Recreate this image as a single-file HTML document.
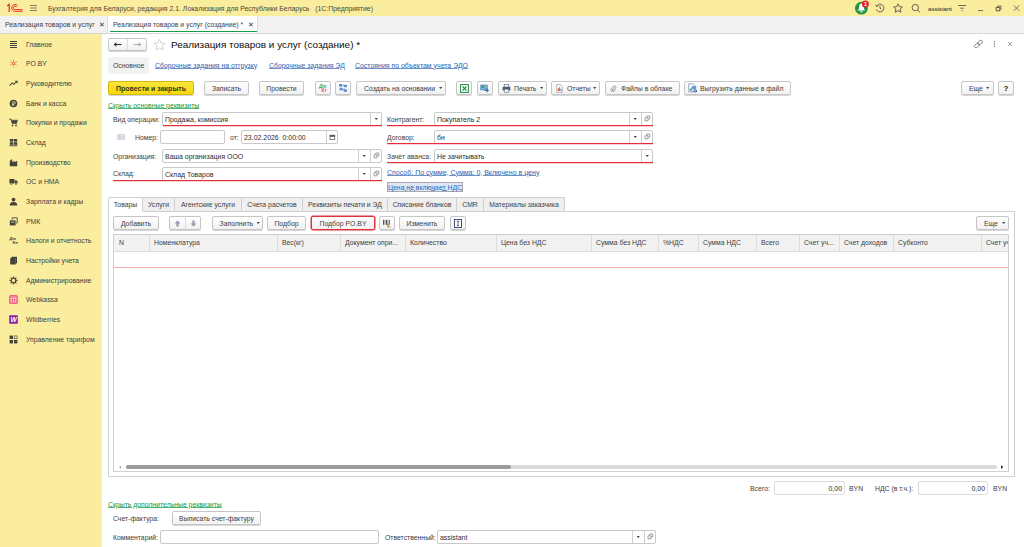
<!DOCTYPE html>
<html lang="ru"><head><meta charset="utf-8"><title>Реализация товаров и услуг (создание)</title>
<style>
*{box-sizing:border-box;margin:0;padding:0}
html,body{width:1024px;height:547px;overflow:hidden;background:#fff}
body{font-family:"Liberation Sans",sans-serif;font-size:6.85px;color:#404040;position:relative;line-height:9px}
.a{position:absolute;white-space:nowrap}
.t{position:absolute;white-space:nowrap;height:9px;line-height:9px}
#titlebar{left:0;top:0;width:1024px;height:16px;background:#fbed9e}
#tabbar{left:0;top:16px;width:1024px;height:18px;background:#f2f2f2;border-bottom:1px solid #d6d6d6}
#side{left:0;top:34px;width:101px;height:513px;background:#fbed9e}
.btn{position:absolute;height:14px;border:1px solid #c6c6c6;border-radius:2px;background:linear-gradient(#fff,#f1f1f1);text-align:center;line-height:14px;white-space:nowrap;box-shadow:0 1px 0.5px rgba(0,0,0,.16)}
.inp{font-size:6.95px;color:#2c2c2c;position:absolute;height:14px;border:1px solid #c9c9c9;border-radius:2px;background:#fff;line-height:13px;padding-left:2px;white-space:nowrap;overflow:hidden}
.ib{position:absolute;top:0;bottom:0;width:11px;border-left:1px solid #d0d0d0}
.red{position:absolute;height:1px;background:#e52d3c;box-shadow:0 0.5px 0.5px rgba(229,45,60,.45)}
.lnk{color:#2f63b3;text-decoration:underline;text-decoration-thickness:0.6px;text-underline-offset:0.3px;text-decoration-color:rgba(47,99,179,.7)}
.g{color:#0e9a47;text-decoration:underline;text-decoration-thickness:0.6px;text-underline-offset:0.3px;text-decoration-color:rgba(14,154,71,.75)}
.tab{position:absolute;top:197px;height:15px;border:1px solid #cfcfcf;border-left:none;background:#efefef;line-height:13px;text-align:center}
.th{position:absolute;top:0;height:16px;line-height:16px;border-right:1px solid #dedede;padding-left:4px;overflow:hidden}
.arr{position:absolute;width:3.4px;height:2px;background:#454545;clip-path:polygon(0 0,100% 0,50% 100%)}
</style></head><body>

<div class="a" id="titlebar">
 <svg class="a" style="left:6px;top:3px" width="18" height="10" viewBox="0 0 18 10"><g fill="none" stroke="#e0242c"><path d="M1.2 3 L3.2 1.3 V9" stroke-width="1.2"/><path d="M11.6 2.6 A3.4 3.4 0 1 0 9.2 8.3 H16.6" stroke-width="0.95"/><path d="M10.6 4 A1.7 1.7 0 1 0 9.2 6.6 H16.6" stroke-width="0.95"/></g></svg>
 <svg class="a" style="left:30px;top:4px" width="8" height="8" viewBox="0 0 8 8"><path d="M0 1.5H7M0 4H7M0 6.5H7" stroke="#6b6650" stroke-width="0.8"/></svg>
 <span class="t" style="left:48px;top:4px;color:#4a4738;font-size:6.9px">Бухгалтерия для Беларуси, редакция 2.1. Локализация для Республики Беларусь &nbsp;&nbsp;(1С:Предприятие)</span>
 <svg class="a" style="left:854px;top:0" width="18" height="16" viewBox="0 0 18 16"><circle cx="7.4" cy="8.2" r="6.4" fill="#1f9647"/><path d="M7.4 3.6 C5.6 3.6 5.2 5.4 5.1 7.2 C5 8.8 4.4 9.8 3.5 10.6 H11.3 C10.4 9.8 9.8 8.8 9.7 7.2 C9.6 5.4 9.2 3.6 7.4 3.6Z" fill="#fff"/><path d="M6.2 11.2 A1.2 1.2 0 0 0 8.6 11.2Z" fill="#fff"/><circle cx="11.4" cy="3.9" r="3.5" fill="#e3242e"/><text x="11.4" y="5.8" font-size="5.4" font-weight="bold" fill="#fff" text-anchor="middle" font-family="Liberation Sans, sans-serif">1</text></svg>
 <svg class="a" style="left:875px;top:3px" width="10" height="10" viewBox="0 0 10 10"><g fill="none" stroke="#4a4a4a" stroke-width="0.85"><path d="M1.7 3.0 A3.9 3.9 0 1 1 1.3 6.2"/><path d="M0.5 1.6 L1.5 3.5 L3.4 2.9"/><path d="M5 2.8 V5.2 L6.6 6.4"/></g></svg>
 <svg class="a" style="left:893px;top:3px" width="10" height="10" viewBox="0 0 10 10"><path d="M5 0.8 L6.3 3.7 L9.4 4 L7.1 6.1 L7.8 9.2 L5 7.6 L2.2 9.2 L2.9 6.1 L0.6 4 L3.7 3.7 Z" fill="none" stroke="#4a4a4a" stroke-width="0.85"/></svg>
 <svg class="a" style="left:911px;top:3px" width="10" height="10" viewBox="0 0 10 10"><circle cx="4.3" cy="4.6" r="3.2" fill="none" stroke="#4a4a4a" stroke-width="0.85"/><path d="M6.6 7 L8.8 9.2" stroke="#4a4a4a" stroke-width="1"/></svg>
 <span class="t" style="left:928px;top:3.5px;font-size:6.1px;color:#222">assistant</span>
 <svg class="a" style="left:957px;top:3px" width="10" height="10" viewBox="0 0 10 10"><path d="M1 2.5H9.2M3.2 5.2H7" stroke="#4a4a4a" stroke-width="0.8"/><path d="M4.2 7.4H6L5.1 8.6Z" fill="#4a4a4a"/></svg>
 <svg class="a" style="left:977px;top:9px" width="7" height="3" viewBox="0 0 7 3"><path d="M1 1.6H6" stroke="#4a4a4a" stroke-width="0.8"/></svg>
 <svg class="a" style="left:995px;top:5px" width="7" height="7" viewBox="0 0 7 7"><path d="M1.2 2.4H4.8V5.8H1.2Z" fill="none" stroke="#444" stroke-width="0.9"/><path d="M2.6 2.2V1H6V4.4H5" fill="none" stroke="#444" stroke-width="0.7"/></svg>
 <svg class="a" style="left:1012px;top:4px" width="9" height="9" viewBox="0 0 9 9"><path d="M1.8 1.4L7.2 6.8M7.2 1.4L1.8 6.8" stroke="#555" stroke-width="0.8"/></svg>
</div>
<div class="a" id="tabbar">
 <span class="t" style="left:5px;top:4px;color:#3e3e48">Реализация товаров и услуг</span>
 <span class="t" style="left:99px;top:4px;font-size:7px;color:#333">✕</span>
 <div class="a" style="left:107px;top:0;width:151px;height:17px;background:#fff;border-left:1px solid #dcdcdc;border-right:1px solid #dcdcdc"></div>
 <div class="a" style="left:110px;top:15px;width:147px;height:1px;background:#1a9b48"></div>
 <span class="t" style="left:113px;top:4px;color:#3e3e48">Реализация товаров и услуг (создание) *</span>
 <span class="t" style="left:248px;top:4px;font-size:7px;color:#333">✕</span>
</div>
<div class="a" id="side">
 <svg class="a" style="left:9px;top:5.5px" width="9" height="9" viewBox="0 0 9 9"><path d="M1 1.5H8M1 3.5H8M1 5.5H8M1 7.5H8" stroke="#45433a" stroke-width="1.1"/></svg><span class="t" style="left:26px;top:5.5px">Главное</span>
 <svg class="a" style="left:9px;top:25.2px" width="9" height="9" viewBox="0 0 9 9"><g stroke="#e0242c" stroke-width="0.6" stroke-dasharray="1 0.5"><path d="M4.5 0.6V8.4M0.9 2.6L8.1 6.4M8.1 2.6L0.9 6.4"/></g><circle cx="4.5" cy="4.5" r="1.1" fill="#fbed9e" stroke="#e0242c" stroke-width="0.55"/></svg><span class="t" style="left:26px;top:25.2px">PO.BY</span>
 <svg class="a" style="left:9px;top:44.9px" width="9" height="9" viewBox="0 0 9 9"><path d="M0.6 6.6L3.2 4L4.8 5.4L7.6 2.6" fill="none" stroke="#45433a" stroke-width="1.05"/><path d="M5.6 1.8H8.6V4.8Z" fill="#45433a"/></svg><span class="t" style="left:26px;top:44.9px">Руководителю</span>
 <svg class="a" style="left:9px;top:64.5px" width="9" height="9" viewBox="0 0 9 9"><circle cx="4.5" cy="4.5" r="3.8" fill="#45433a"/><path d="M3.8 6.8V2.6H5.2A1.2 1.2 0 0 1 5.2 5H3M3 6H5.2" stroke="#fbed9e" stroke-width="0.7" fill="none"/></svg><span class="t" style="left:26px;top:64.5px">Банк и касса</span>
 <svg class="a" style="left:9px;top:84.2px" width="9" height="9" viewBox="0 0 9 9"><path d="M0.5 1H2L3 5.5H7.6L8.4 2.2H2.4Z" fill="#45433a" stroke="#45433a" stroke-width="0.6"/><circle cx="3.5" cy="7.4" r="0.9" fill="#45433a"/><circle cx="7" cy="7.4" r="0.9" fill="#45433a"/></svg><span class="t" style="left:26px;top:84.2px">Покупки и продажи</span>
 <svg class="a" style="left:9px;top:103.9px" width="9" height="9" viewBox="0 0 9 9"><g fill="#45433a"><rect x="0.8" y="1" width="3.4" height="2.6"/><rect x="4.8" y="1" width="3.4" height="2.6"/><rect x="0.8" y="4.2" width="3.4" height="2.6"/><rect x="4.8" y="4.2" width="3.4" height="2.6"/><rect x="0.5" y="7.3" width="8" height="0.9"/></g></svg><span class="t" style="left:26px;top:103.9px">Склад</span>
 <svg class="a" style="left:9px;top:123.6px" width="9" height="9" viewBox="0 0 9 9"><path d="M0.8 8.2V3.2L2 1.6H3.2V4.2L5.6 2.8V4.2L8.2 2.8V8.2Z" fill="#45433a"/></svg><span class="t" style="left:26px;top:123.6px">Производство</span>
 <svg class="a" style="left:9px;top:143.3px" width="9" height="9" viewBox="0 0 9 9"><path d="M0.4 2H5.4V6.6H0.4Z M5.8 3.2H7.4L8.6 4.8V6.6H5.8Z" fill="#45433a"/><circle cx="2.2" cy="7" r="1" fill="#45433a" stroke="#fbed9e" stroke-width="0.4"/><circle cx="7" cy="7" r="1" fill="#45433a" stroke="#fbed9e" stroke-width="0.4"/></svg><span class="t" style="left:26px;top:143.3px">ОС и НМА</span>
 <svg class="a" style="left:9px;top:162.9px" width="9" height="9" viewBox="0 0 9 9"><circle cx="4.5" cy="2.6" r="1.9" fill="#45433a"/><path d="M0.8 8.4C0.8 5.6 2.6 5 4.5 5C6.4 5 8.2 5.6 8.2 8.4Z" fill="#45433a"/></svg><span class="t" style="left:26px;top:162.9px">Зарплата и кадры</span>
 <svg class="a" style="left:9px;top:182.6px" width="9" height="9" viewBox="0 0 9 9"><path d="M0.8 3.4H6.6V8.4H0.8Z" fill="#45433a"/><path d="M3.2 2.8V0.8H8.2V6H7.2" fill="none" stroke="#45433a" stroke-width="0.9"/><path d="M2 5.2H5.4" stroke="#fbed9e" stroke-width="0.7"/></svg><span class="t" style="left:26px;top:182.6px">РМК</span>
 <svg class="a" style="left:9px;top:202.3px" width="9" height="9" viewBox="0 0 9 9"><text x="0.3" y="4" font-size="4.2" font-weight="bold" font-style="italic" fill="#45433a" font-family="Liberation Sans, sans-serif">Дт</text><text x="3.6" y="8.4" font-size="4.2" font-weight="bold" font-style="italic" fill="#45433a" font-family="Liberation Sans, sans-serif">Кт</text></svg><span class="t" style="left:26px;top:202.3px">Налоги и отчетность</span>
 <svg class="a" style="left:9px;top:222.0px" width="9" height="9" viewBox="0 0 9 9"><path d="M1.2 2.4L3 0.8H8V7L6.4 8.6H1.2Z" fill="#45433a"/><path d="M6.4 2.4V8.4" stroke="#8a8673" stroke-width="0.5"/></svg><span class="t" style="left:26px;top:222.0px">Настройки учета</span>
 <svg class="a" style="left:9px;top:241.7px" width="9" height="9" viewBox="0 0 9 9"><circle cx="4.5" cy="4.5" r="2.3" fill="none" stroke="#45433a" stroke-width="1.3"/><g stroke="#45433a" stroke-width="1.2"><path d="M4.5 0.4V1.8M4.5 7.2V8.6M0.4 4.5H1.8M7.2 4.5H8.6M1.6 1.6L2.6 2.6M6.4 6.4L7.4 7.4M7.4 1.6L6.4 2.6M2.6 6.4L1.6 7.4"/></g></svg><span class="t" style="left:26px;top:241.7px">Администрирование</span>
 <svg class="a" style="left:9px;top:261.3px" width="9" height="9" viewBox="0 0 9 9"><rect x="0.3" y="0.3" width="8.4" height="8.4" rx="1.2" fill="#ea3a60"/><rect x="1.5" y="1.5" width="6" height="6" fill="#fff"/><rect x="1.5" y="1.5" width="6" height="1.4" fill="#f27a94"/><path d="M3.5 2.9V7.5M5.5 2.9V7.5M1.5 4.4H7.5M1.5 6H7.5" stroke="#ea3a60" stroke-width="0.6"/></svg><span class="t" style="left:26px;top:261.3px">Webkassa</span>
 <svg class="a" style="left:9px;top:281.0px" width="9" height="9" viewBox="0 0 9 9"><rect x="0.2" y="0.2" width="8.6" height="8.6" rx="0.8" fill="#8a1fa0"/><text x="4.5" y="6.9" font-size="6.6" font-weight="bold" font-style="italic" fill="#fff" text-anchor="middle" font-family="Liberation Sans, sans-serif">W</text></svg><span class="t" style="left:26px;top:281.0px">Wildberries</span>
 <svg class="a" style="left:9px;top:300.7px" width="9" height="9" viewBox="0 0 9 9"><g fill="#45433a"><rect x="0.6" y="0.6" width="3.4" height="3.4"/><rect x="0.6" y="5" width="3.4" height="3.4"/><rect x="5" y="5" width="3.4" height="3.4"/></g><rect x="5.3" y="0.9" width="2.8" height="2.8" fill="none" stroke="#45433a" stroke-width="0.6"/></svg><span class="t" style="left:26px;top:300.7px">Управление тарифом</span>
</div>
<div class="a" id="main" style="left:101px;top:34px;width:923px;height:513px;background:#fff;border-left:1px solid #e9e9e9"></div>
<!-- header -->
<div class="btn" style="left:108px;top:38px;width:39px;height:13px"></div>
<div class="a" style="left:127px;top:39px;width:1px;height:11px;background:#dcdcdc"></div>
<svg class="a" style="left:112px;top:41px" width="12" height="7" viewBox="0 0 12 7"><path d="M9.5 3.5H3" stroke="#333" stroke-width="1.1"/><path d="M1.6 3.5L4.4 1.2V5.8Z" fill="#333"/></svg>
<svg class="a" style="left:131px;top:41px" width="12" height="7" viewBox="0 0 12 7"><path d="M2.5 3.5H9" stroke="#aaa" stroke-width="1"/><path d="M10.4 3.5L7.6 1.2V5.8Z" fill="#aaa"/></svg>
<svg class="a" style="left:153px;top:38px" width="13" height="13" viewBox="0 0 13 13"><path d="M6.5 1.2 L8.1 4.9 L12.1 5.3 L9.1 8 L10 11.9 L6.5 9.9 L3 11.9 L3.9 8 L0.9 5.3 L4.9 4.9 Z" fill="none" stroke="#c9c9c9" stroke-width="0.8"/></svg>
<span class="a" style="left:171px;top:38px;font-size:9.95px;line-height:13px;color:#0c0c0c">Реализация товаров и услуг (создание) *</span>
<svg class="a" style="left:973px;top:39px" width="11" height="10" viewBox="0 0 11 10"><g fill="none" stroke="#7d7d7d" stroke-width="0.8" transform="rotate(-42 5.5 5)"><rect x="0.6" y="3.4" width="5.6" height="3.2" rx="1.6"/><rect x="4.8" y="3.4" width="5.6" height="3.2" rx="1.6"/></g></svg>
<svg class="a" style="left:993px;top:40px" width="3" height="8" viewBox="0 0 3 8"><g fill="#6a6a6a"><rect x="0.9" y="1" width="1" height="1.3"/><rect x="0.9" y="3.2" width="1" height="1.3"/><rect x="0.9" y="5.4" width="1" height="1.3"/></g></svg>
<svg class="a" style="left:1007px;top:41px" width="6" height="6" viewBox="0 0 6 6"><path d="M1.2 1.2L5 5M5 1.2L1.2 5" stroke="#7d7d7d" stroke-width="0.8"/></svg>
<!-- subnav -->
<div class="a" style="left:108px;top:57px;width:41px;height:17px;background:#f2f2f2;border-radius:2px"></div>
<span class="t" style="left:113px;top:61px">Основное</span>
<span class="t lnk" style="left:155px;top:61px;font-size:6.9px">Сборочные задания на отгрузку</span>
<span class="t lnk" style="left:269px;top:61px;font-size:6.9px">Сборочные задания ЭД</span>
<span class="t lnk" style="left:355px;top:61px;font-size:6.95px">Состояния по объектам учета ЭДО</span>
<!-- toolbar -->
<div class="btn" style="left:108px;top:81px;width:86px;background:linear-gradient(#fbe63c,#f5d90e);border-color:#d4b90a;font-weight:bold;color:#3b3514;font-size:7px">Провести и закрыть</div>
<div class="btn" style="left:204px;top:81px;width:45px;">Записать</div>
<div class="btn" style="left:259px;top:81px;width:45px;">Провести</div>
<div class="btn" style="left:315px;top:81px;width:16px;"><svg class="a" style="left:2px;top:1px" width="10" height="10" viewBox="0 0 10 10"><text x="1" y="4.6" font-size="4.6" font-weight="bold" fill="#3aa85c" font-style="italic" font-family="Liberation Sans, sans-serif">Дт</text><text x="3.6" y="9.2" font-size="4.6" font-weight="bold" fill="#ee4b4b" font-family="Liberation Sans, sans-serif">Кт</text></svg></div>
<div class="btn" style="left:335px;top:81px;width:16px;"><svg class="a" style="left:2px;top:1px" width="10" height="10" viewBox="0 0 10 10"><g fill="#5b8fd0"><rect x="1" y="1" width="3" height="2.4"/><rect x="5.6" y="1.8" width="3.4" height="2.4"/><rect x="1.6" y="5" width="3" height="2.4"/><rect x="5.6" y="6.4" width="3.4" height="2.4"/></g><path d="M4 2.2H5.6M3 3.4V5M4.6 6.2H7.2V6.4" stroke="#4a6fa8" stroke-width="0.6" fill="none"/></svg></div>
<div class="btn" style="left:356px;top:81px;width:90px;text-align:left;padding-left:7px">Создать на основании<i class="arr" style="left:82px;top:5px"></i></div>
<div class="btn" style="left:456px;top:81px;width:16px;"><svg class="a" style="left:3px;top:2px" width="9" height="9" viewBox="0 0 9 9"><rect x="0.6" y="0.6" width="7.8" height="7.8" fill="#fff" stroke="#1f8a45" stroke-width="1"/><path d="M2.6 2.4L6.4 6.6M6.4 2.4L2.6 6.6" stroke="#1f8a45" stroke-width="1.2"/></svg></div>
<div class="btn" style="left:477px;top:81px;width:16px;"><svg class="a" style="left:2px;top:2px" width="10" height="9" viewBox="0 0 10 9"><rect x="0.8" y="1" width="6.4" height="4.8" fill="#7fb2e0" stroke="#3f78b8" stroke-width="0.7"/><rect x="1.8" y="2" width="2.4" height="2" fill="#3a9a58"/><path d="M4.4 6.4H8M6.6 4.6L8.6 6.4L6.6 8.2" stroke="#2d62a8" stroke-width="1" fill="none"/></svg></div>
<div class="btn" style="left:498px;top:81px;width:49px;text-align:left;padding-left:15px"><svg class="a" style="left:3px;top:2px" width="9" height="9" viewBox="0 0 9 9"><rect x="2.2" y="0.6" width="4.6" height="2.6" fill="#fff" stroke="#55607a" stroke-width="0.6"/><rect x="0.6" y="2.8" width="7.8" height="3.6" rx="0.6" fill="#4f5d7e"/><rect x="2.2" y="5.2" width="4.6" height="3" fill="#fff" stroke="#55607a" stroke-width="0.6"/></svg>Печать<i class="arr" style="left:41px;top:5px"></i></div>
<div class="btn" style="left:551px;top:81px;width:49px;text-align:left;padding-left:15px"><svg class="a" style="left:4px;top:2px" width="7" height="9" viewBox="0 0 7 9"><path d="M0.8 0.6H4.6L6.2 2.2V8.4H0.8Z" fill="#fff" stroke="#8a8a8a" stroke-width="0.6"/><rect x="1.8" y="4.4" width="1" height="2.6" fill="#d9342b"/><rect x="3.2" y="3.2" width="1" height="3.8" fill="#3a8a4a"/><rect x="4.6" y="5" width="0.8" height="2" fill="#3f78b8"/></svg>Отчеты<i class="arr" style="left:41px;top:5px"></i></div>
<div class="btn" style="left:605px;top:81px;width:75px;text-align:left;padding-left:15px"><svg class="a" style="left:4px;top:3px" width="6.5" height="7.3" viewBox="0 0 8 9"><path d="M5.6 2.6L2.8 5.6A0.9 0.9 0 0 0 4.1 6.8L7 3.6A1.6 1.6 0 0 0 4.6 1.5L1.6 4.8A2.2 2.2 0 0 0 4.8 7.8L6.8 5.6" fill="none" stroke="#666" stroke-width="0.7"/></svg>Файлы в облаке</div>
<div class="btn" style="left:684px;top:81px;width:107px;text-align:left;padding-left:15px"><svg class="a" style="left:3px;top:1px" width="10" height="10" viewBox="0 0 10 10"><path d="M0.8 0.8H5L6.8 2.6V8.8H0.8Z" fill="#fff" stroke="#6a7fa8" stroke-width="0.7"/><rect x="3.6" y="3" width="4.6" height="3.4" fill="#5aa0dc"/><path d="M4.6 8H8.6M7.4 6.4L9 8L7.4 9.6" stroke="#2d62a8" stroke-width="0.9" fill="none"/><rect x="1.8" y="5.6" width="2" height="2" fill="#3a9a58"/></svg>Выгрузить данные в файл</div>
<div class="btn" style="left:961px;top:81px;width:33px;text-align:left;padding-left:7px">Еще<i class="arr" style="left:24px;top:5px"></i></div>
<div class="btn" style="left:998px;top:81px;width:16px;font-weight:bold;font-size:8px;color:#222">?</div>
<span class="t g" style="left:108px;top:101px">Скрыть основные реквизиты</span>
<!-- form -->
<span class="t " style="left:113px;top:115px">Вид операции:</span>
<div class="inp" style="left:162px;top:112px;width:220px;">Продажа, комиссия<div class="ib" style="right:0px"><i class="arr" style="left:3.5px;top:5px"></i></div></div>
<svg class="a" style="left:117px;top:134px" width="8" height="6" viewBox="0 0 8 6"><rect x="0.4" y="0.4" width="7.2" height="5.2" rx="0.8" fill="#e4e6ee" stroke="#b8bcc8" stroke-width="0.6"/><path d="M2.6 0.6V5.4M2.6 3H7.4" stroke="#b8bcc8" stroke-width="0.6"/></svg>
<span class="t " style="left:135px;top:133px">Номер:</span>
<div class="inp" style="left:160px;top:130px;width:65px;"></div>
<span class="t " style="left:230px;top:133px">от:</span>
<div class="inp" style="left:241px;top:130px;width:97px;">23.02.2026&nbsp; 0:00:00<div class="ib" style="right:0"><svg class="a" style="left:2px;top:3px" width="7" height="7" viewBox="0 0 7 7"><rect x="1" y="1.2" width="4.8" height="4.4" fill="#fff" stroke="#4a4a4a" stroke-width="0.7"/><rect x="1" y="1.2" width="4.8" height="1.6" fill="#4a4a4a"/></svg></div></div>
<span class="t " style="left:113px;top:151.5px">Организация:</span>
<div class="inp" style="left:162px;top:149px;width:220px;">Ваша организация ООО<div class="ib" style="right:11px;width:12px"><i class="arr" style="left:3.5px;top:5px"></i></div><div class="ib" style="right:0px"><svg class="a" style="left:2px;top:2px" width="7" height="7" viewBox="0 0 7 7"><path d="M1 2.8H4V5.8H1Z M2.8 2.6V1H5.8V4H4.2" fill="none" stroke="#7a7a7a" stroke-width="0.7"/></svg></div></div>
<span class="t " style="left:113px;top:169px">Склад:</span>
<div class="inp" style="left:162px;top:167px;width:220px;">Склад Товаров<div class="ib" style="right:11px;width:12px"><i class="arr" style="left:3.5px;top:5px"></i></div><div class="ib" style="right:0px"><svg class="a" style="left:2px;top:2px" width="7" height="7" viewBox="0 0 7 7"><path d="M1 2.8H4V5.8H1Z M2.8 2.6V1H5.8V4H4.2" fill="none" stroke="#7a7a7a" stroke-width="0.7"/></svg></div></div>
<span class="t " style="left:387px;top:115px">Контрагент:</span>
<div class="inp" style="left:434px;top:112px;width:219px;">Покупатель 2<div class="ib" style="right:11px;width:12px"><i class="arr" style="left:3.5px;top:5px"></i></div><div class="ib" style="right:0px"><svg class="a" style="left:2px;top:2px" width="7" height="7" viewBox="0 0 7 7"><path d="M1 2.8H4V5.8H1Z M2.8 2.6V1H5.8V4H4.2" fill="none" stroke="#7a7a7a" stroke-width="0.7"/></svg></div></div>
<span class="t " style="left:387px;top:133px">Договор:</span>
<div class="inp" style="left:434px;top:130px;width:219px;">бн<div class="ib" style="right:11px;width:12px"><i class="arr" style="left:3.5px;top:5px"></i></div><div class="ib" style="right:0px"><svg class="a" style="left:2px;top:2px" width="7" height="7" viewBox="0 0 7 7"><path d="M1 2.8H4V5.8H1Z M2.8 2.6V1H5.8V4H4.2" fill="none" stroke="#7a7a7a" stroke-width="0.7"/></svg></div></div>
<span class="t " style="left:387px;top:151.5px">Зачет аванса:</span>
<div class="inp" style="left:434px;top:149px;width:219px;">Не зачитывать<div class="ib" style="right:0px"><i class="arr" style="left:3.5px;top:5px"></i></div></div>
<div class="red" style="left:163px;top:125px;width:219px"></div>
<div class="red" style="left:113px;top:180px;width:269px"></div>
<div class="red" style="left:387px;top:125px;width:266px"></div>
<div class="red" style="left:387px;top:143px;width:266px"></div>
<div class="red" style="left:387px;top:162px;width:266px"></div>
<span class="t lnk" style="left:387px;top:168px;font-size:7.03px">Способ: По сумме, Сумма: 0, Включено в цену</span>
<div class="a" style="left:387px;top:182px;width:76px;height:10px;background:#dde7f6;border:1px solid #a9a9a9"></div>
<span class="t lnk" style="left:388px;top:182.5px">Цена не включает НДС</span>
<!-- tabs -->
<div class="a" style="left:108px;top:211px;width:907px;height:266px;border:1px solid #cfcfcf;background:#fff"></div>
<div class="tab" style="left:108px;width:35px;background:#fff;border-left:1px solid #cfcfcf;border-bottom-color:#fff;border-radius:2px 0 0 0">Товары</div>
<div class="tab" style="left:143px;width:32px">Услуги</div>
<div class="tab" style="left:175px;width:67px">Агентские услуги</div>
<div class="tab" style="left:242px;width:61px">Счета расчетов</div>
<div class="tab" style="left:303px;width:85px">Реквизиты печати и ЭД</div>
<div class="tab" style="left:388px;width:69px">Списание бланков</div>
<div class="tab" style="left:457px;width:27px">CMR</div>
<div class="tab" style="left:484px;width:81px">Материалы заказчика</div>
<div class="btn" style="left:113px;top:216px;width:46px;">Добавить</div>
<div class="btn" style="left:169px;top:216px;width:32px;"><div class="a" style="left:15px;top:0;width:1px;height:12px;background:#dcdcdc"></div><svg class="a" style="left:4px;top:3px" width="7" height="7" viewBox="0 0 7 7"><path d="M3.5 0.4L6.4 3.4H4.6V6.6H2.4V3.4H0.6Z" fill="#8c9db3"/></svg><svg class="a" style="left:20px;top:3px" width="7" height="7" viewBox="0 0 7 7"><path d="M3.5 6.6L6.4 3.6H4.6V0.4H2.4V3.6H0.6Z" fill="#8c9db3"/></svg></div>
<div class="btn" style="left:212px;top:216px;width:51px;text-align:left;padding-left:6.5px">Заполнить<i class="arr" style="left:43.5px;top:5px"></i></div>
<div class="btn" style="left:267px;top:216px;width:39px;">Подбор</div>
<div class="btn" style="left:311px;top:216px;width:64px;border-color:#e0323c;box-shadow:0 0 0 0.5px #e0323c">Подбор PO.BY</div>
<div class="btn" style="left:379px;top:216px;width:16px;"><svg class="a" style="left:2px;top:2px" width="10" height="9" viewBox="0 0 10 9"><g fill="#555"><rect x="1" y="0.8" width="1" height="5"/><rect x="2.6" y="0.8" width="0.6" height="5"/><rect x="3.8" y="0.8" width="1.2" height="5"/><rect x="5.6" y="0.8" width="0.6" height="5"/><rect x="6.8" y="0.8" width="1" height="5"/></g><path d="M5 4.4L8.4 8.4L6.6 7.6L5.8 8.8Z" fill="#d9a02a" stroke="#8a6a1a" stroke-width="0.3"/></svg></div>
<div class="btn" style="left:399px;top:216px;width:46px;">Изменить</div>
<div class="btn" style="left:450px;top:216px;width:16px;"><svg class="a" style="left:3px;top:2px" width="8" height="9" viewBox="0 0 8 9"><rect x="0.5" y="0.5" width="7" height="8" fill="#fff" stroke="#2f3f6e" stroke-width="0.9"/><path d="M4 2V7M2.8 3L4 1.8L5.2 3M2.8 6L4 7.2L5.2 6" stroke="#333" stroke-width="0.7" fill="none"/></svg></div>
<div class="btn" style="left:976px;top:216px;width:33px;text-align:left;padding-left:7px">Еще<i class="arr" style="left:25px;top:5px"></i></div>
<div class="a" style="left:113px;top:234px;width:896px;height:238px;border:1px solid #cfcfcf;background:#fff;overflow:hidden">
 <div class="a" style="left:0;top:0;width:894px;height:17px;background:#f2f2f2;border-bottom:1px solid #dedede"></div>
 <div class="th" style="left:-1px;width:37px; padding-left:6px;">N</div>
 <div class="th" style="left:36px;width:128px;">Номенклатура</div>
 <div class="th" style="left:164px;width:63px;">Вес(кг)</div>
 <div class="th" style="left:227px;width:65px;">Документ опри...</div>
 <div class="th" style="left:292px;width:91px;">Количество</div>
 <div class="th" style="left:383px;width:95px;">Цена без НДС</div>
 <div class="th" style="left:478px;width:67px;">Сумма без НДС</div>
 <div class="th" style="left:545px;width:40px;">%НДС</div>
 <div class="th" style="left:585px;width:58px;">Сумма НДС</div>
 <div class="th" style="left:643px;width:43px;">Всего</div>
 <div class="th" style="left:686px;width:40px;">Счет уч...</div>
 <div class="th" style="left:726px;width:54px;">Счет доходов</div>
 <div class="th" style="left:780px;width:88px;">Субконто</div>
 <div class="th" style="left:868px;width:38px;">Счет уч</div>
 <div class="a" style="left:0;top:32px;width:894px;height:1px;background:#f4adb0"></div>
 <div class="a" style="left:12px;top:230px;width:871px;height:4px;border-radius:2px;background:#dadada"></div>
 <div class="a" style="left:12px;top:230px;width:385px;height:4px;border-radius:2px;background:#9b9b9b"></div>
 <i class="a" style="left:5px;top:230.8px;width:2px;height:2.8px;background:#999;clip-path:polygon(100% 0,0 50%,100% 100%)"></i>
 <i class="a" style="left:887px;top:230.3px;width:2.4px;height:3.6px;background:#333;clip-path:polygon(0 0,100% 50%,0 100%)"></i>
</div>
<span class="t " style="left:750px;top:484px">Всего:</span>
<div class="inp" style="left:774px;top:481px;width:71px;border-color:#dcdcdc;text-align:right;padding-right:2px">0,00</div>
<span class="t " style="left:849px;top:484px">BYN</span>
<span class="t " style="left:875px;top:484px">НДС (в т.ч.):</span>
<div class="inp" style="left:918px;top:481px;width:70px;border-color:#dcdcdc;text-align:right;padding-right:2px">0,00</div>
<span class="t " style="left:993px;top:484px">BYN</span>
<span class="t g" style="left:108px;top:500px">Скрыть дополнительные реквизиты</span>
<span class="t " style="left:113px;top:514px">Счет-фактура:</span>
<div class="btn" style="left:172px;top:511px;width:89px">Выписать счет-фактуру</div>
<span class="t " style="left:113px;top:532.5px">Комментарий:</span>
<div class="inp" style="left:160px;top:530px;width:219px"></div>
<span class="t " style="left:385px;top:532.5px">Ответственный:</span>
<div class="inp" style="left:437px;top:530px;width:219px">assistant<div class="ib" style="right:11px;width:12px"><i class="arr" style="left:3.5px;top:5px"></i></div><div class="ib" style="right:0"><svg class="a" style="left:2px;top:2px" width="7" height="7" viewBox="0 0 7 7"><path d="M1 2.8H4V5.8H1Z M2.8 2.6V1H5.8V4H4.2" fill="none" stroke="#7a7a7a" stroke-width="0.7"/></svg></div></div>
</body></html>
